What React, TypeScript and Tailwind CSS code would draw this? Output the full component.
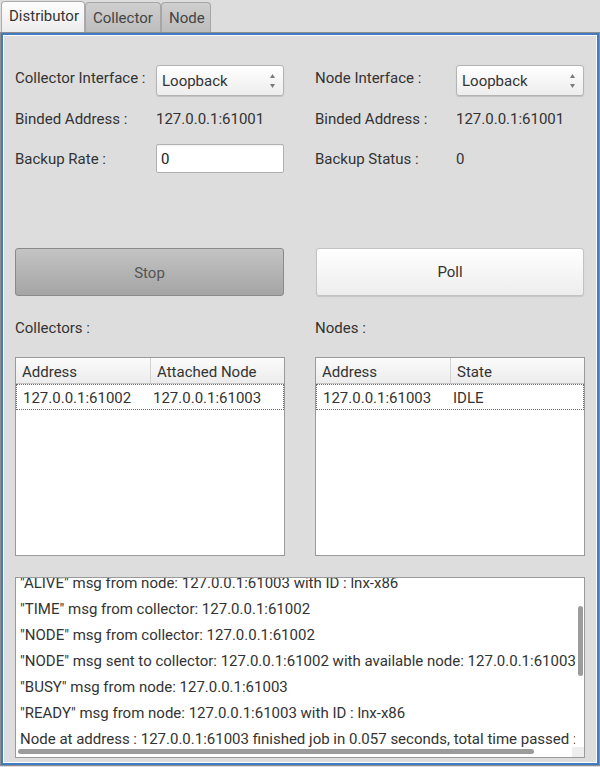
import React from "react";

function Select({ value }: { value: string }) {
  return (
    <div className="relative w-[128px] h-[31px] rounded-[3px] border border-[#b3b3b3] bg-gradient-to-b from-white to-[#ededed] shadow-[0_1px_1px_rgba(0,0,0,0.12)] flex items-center pl-[5px] leading-[18px]">
      <span>{value}</span>
      <svg className="absolute left-[113px] top-[8px]" width="5" height="14" viewBox="0 0 5 14">
        <path d="M2.5 0 L5 4 H0 Z" fill="#7a7a7a" />
        <path d="M0 10 H5 L2.5 14 Z" fill="#7a7a7a" />
      </svg>
    </div>
  );
}

function FormColumn({
  iface,
  third,
  thirdValue,
  input,
}: {
  iface: string;
  third: string;
  thirdValue: string;
  input: boolean;
}) {
  return (
    <div className="flex flex-col">
      <div className="flex h-[31px]">
        <div className="w-[141px] pt-[4px] leading-[18px]">{iface}</div>
        <Select value="Loopback" />
      </div>
      <div className="flex mt-[14px] h-[18px] leading-[18px]">
        <div className="w-[141px]">Binded Address :</div>
        <div>127.0.0.1:61001</div>
      </div>
      <div className="flex mt-[16px] h-[29px]">
        <div className="w-[141px] pt-[6px] leading-[18px]">{third}</div>
        {input ? (
          <div className="w-[128px] h-[29px] rounded-[2px] border border-[#b0b0b0] bg-white shadow-[inset_0_1px_1px_rgba(0,0,0,0.06)] flex items-center pl-[4px] leading-[18px] text-[#222]">
            {thirdValue}
          </div>
        ) : (
          <div className="pt-[6px] leading-[18px]">{thirdValue}</div>
        )}
      </div>
    </div>
  );
}

function Table({
  h1,
  h2,
  c1,
  c2,
  split,
  rowSplit,
}: {
  h1: string;
  h2: string;
  c1: string;
  c2: string;
  split: number;
  rowSplit: number;
}) {
  return (
    <div className="h-[199px] border border-[#9a9a9a] bg-white flex flex-col">
      <div className="flex h-[26px] border-b border-[#c4c4c4] bg-gradient-to-b from-[#fbfbfb] to-[#ececec] leading-[18px]">
        <div
          className="h-full border-r border-[#d2d2d2] pl-[6px] pt-[5px]"
          style={{ width: split }}
        >
          {h1}
        </div>
        <div className="flex-1 pl-[6px] pt-[5px]">{h2}</div>
      </div>
      <div className="flex items-center h-[26px] pt-[2px] border border-dotted border-[#6e6e6e] leading-[18px]">
        <div className="pl-[6px]" style={{ width: rowSplit }}>
          {c1}
        </div>
        <div>{c2}</div>
      </div>
    </div>
  );
}

const logLines = [
  '"ALIVE" msg from node: 127.0.0.1:61003 with ID : lnx-x86',
  '"TIME" msg from collector: 127.0.0.1:61002',
  '"NODE" msg from collector: 127.0.0.1:61002',
  '"NODE" msg sent to collector: 127.0.0.1:61002 with available node: 127.0.0.1:61003',
  '"BUSY" msg from node: 127.0.0.1:61003',
  '"READY" msg from node: 127.0.0.1:61003 with ID : lnx-x86',
  "Node at address : 127.0.0.1:61003 finished job in 0.057 seconds, total time passed : 0.057 seconds",
];

export default function App() {
  return (
    <div className="w-[600px] h-[767px] bg-[#dddddd] font-['Roboto',sans-serif] text-[15px] text-[#333] overflow-hidden">
      {/* Tabs */}
      <div className="h-[32px] flex items-end pl-[1px]">
        <div className="w-[84px] h-[31px] rounded-t-[4px] border border-b-0 border-[#ababab] bg-gradient-to-b from-[#fdfdfd] to-[#ececec] pl-[7px] pt-[5px] leading-[18px] text-[#333]">
          Distributor
        </div>
        <div className="w-[76px] h-[30px] rounded-t-[4px] border border-b-0 border-[#a6a6a6] bg-gradient-to-b from-[#cfcfcf] to-[#bdbdbd] pl-[7px] pt-[6px] leading-[18px] text-[#444]">
          Collector
        </div>
        <div className="w-[50px] h-[30px] rounded-t-[4px] border border-b-0 border-[#a6a6a6] bg-gradient-to-b from-[#cfcfcf] to-[#bdbdbd] pl-[7px] pt-[6px] leading-[18px] text-[#444]">
          Node
        </div>
      </div>

      {/* Panel */}
      <div className="h-[734px] border border-[#8c8c8c] shadow-[inset_0_0_0_2px_#3f7cc3,inset_0_0_0_3px_#ffffff] px-[14px] pt-[32px]">
        <div className="grid grid-cols-[270px_270px] gap-x-[30px]">
          <FormColumn
            iface="Collector Interface :"
            third="Backup Rate :"
            thirdValue="0"
            input={true}
          />
          <FormColumn
            iface="Node Interface :"
            third="Backup Status :"
            thirdValue="0"
            input={false}
          />
        </div>

        <div className="grid grid-cols-[270px_270px] gap-x-[30px] mt-[75px]">
          <div className="w-[269px] h-[48px] rounded-[3px] border border-[#8a8a8a] bg-gradient-to-b from-[#c4c4c4] to-[#a4a4a4] flex items-center justify-center pt-[3px] text-[#555]">
            Stop
          </div>
          <div className="ml-[1px] w-[268px] h-[48px] rounded-[3px] border border-[#c2c2c2] bg-gradient-to-b from-white to-[#ededed] shadow-[0_1px_1px_rgba(0,0,0,0.1)] flex items-center justify-center pt-[1px] text-[#333]">
            Poll
          </div>
        </div>

        <div className="grid grid-cols-[270px_270px] gap-x-[30px] mt-[23px] leading-[18px]">
          <div>Collectors :</div>
          <div>Nodes :</div>
        </div>

        <div className="grid grid-cols-[270px_270px] gap-x-[30px] mt-[20px]">
          <Table
            h1="Address"
            h2="Attached Node"
            c1="127.0.0.1:61002"
            c2="127.0.0.1:61003"
            split={135}
            rowSplit={136}
          />
          <Table
            h1="Address"
            h2="State"
            c1="127.0.0.1:61003"
            c2="IDLE"
            split={135}
            rowSplit={136}
          />
        </div>

        {/* Log */}
        <div className="relative mt-[21px] w-[570px] h-[181px] border border-[#9a9a9a] bg-white overflow-hidden">
          <div className="w-[559px] h-full overflow-hidden">
            <div className="-mt-[8px] pl-[4px]">
              {logLines.map((l, i) => (
                <div key={i} className="h-[26px] leading-[26px] whitespace-nowrap">
                  {l}
                </div>
              ))}
            </div>
          </div>
          <div className="absolute left-[562px] top-[28px] w-[5px] h-[70px] rounded-full bg-[#9c9c9c]" />
          <div className="absolute left-[2px] top-[171px] w-[516px] h-[5px] rounded-full bg-[#9c9c9c]" />
          <div className="absolute right-0 bottom-0 w-[12px] h-[10px] bg-[#eeeeee]" />
        </div>
      </div>
    </div>
  );
}
